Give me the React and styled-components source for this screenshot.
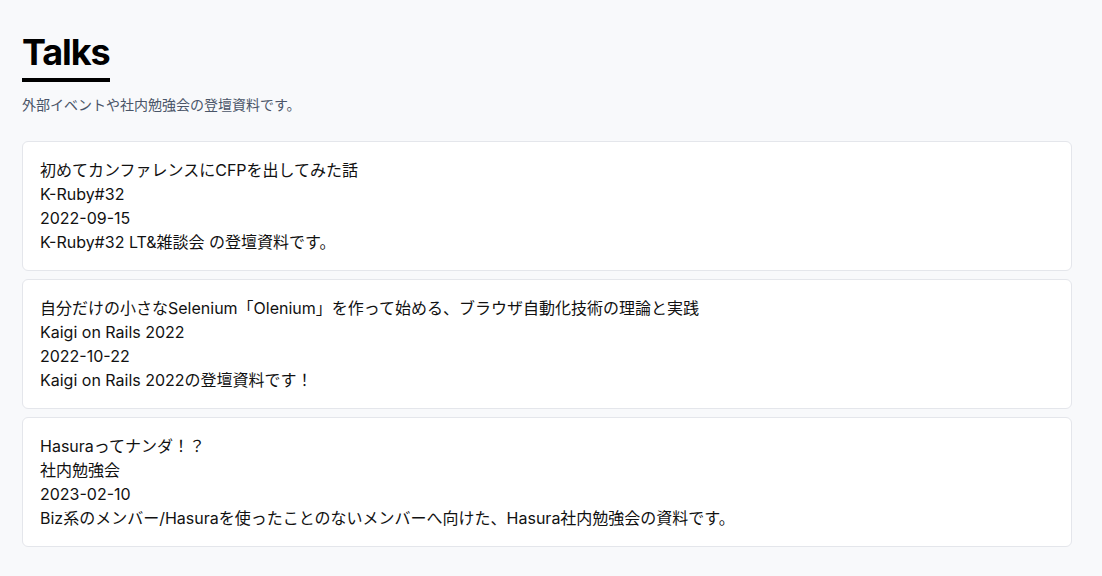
import React from 'react';
import styled, { createGlobalStyle } from 'styled-components';

const GlobalStyle = createGlobalStyle`
  html, body {
    margin: 0;
    padding: 0;
    background: #f8f9fb;
  }
  body {
    font-family: Inter, "Noto Sans CJK JP", sans-serif;
    color: #111;
  }
`;

const Page = styled.main`
  padding: 30px 22px 24px 22px;
  max-width: 1050px;
`;

const Header = styled.header`
  margin-bottom: 26px;
`;

const Title = styled.h1`
  display: inline-block;
  margin: 0;
  font-size: 36px;
  font-weight: 700;
  line-height: 44px;
  letter-spacing: -1.1px;
  padding-bottom: 4px;
  border-bottom: 4px solid #000;
  color: #000;
`;

const Lead = styled.p`
  margin: 13px 0 0;
  font-size: 14px;
  line-height: 20px;
  color: #4a5568;
`;

const TalkList = styled.ul`
  list-style: none;
  margin: 0;
  padding: 0;
  display: flex;
  flex-direction: column;
  gap: 8px;
`;

const TalkCard = styled.li`
  background: #fff;
  border: 1px solid #e4e6eb;
  border-radius: 6px;
  padding: 16px 17px;
`;

const Line = styled.div`
  font-size: 16px;
  line-height: 24px;
  color: #111;
`;

const talks = [
  {
    title: '初めてカンファレンスにCFPを出してみた話',
    event: 'K-Ruby#32',
    date: '2022-09-15',
    description: 'K-Ruby#32 LT&雑談会 の登壇資料です。',
  },
  {
    title: '自分だけの小さなSelenium「Olenium」を作って始める、ブラウザ自動化技術の理論と実践',
    event: 'Kaigi on Rails 2022',
    date: '2022-10-22',
    description: 'Kaigi on Rails 2022の登壇資料です！',
  },
  {
    title: 'Hasuraってナンダ！？',
    event: '社内勉強会',
    date: '2023-02-10',
    description: 'Biz系のメンバー/Hasuraを使ったことのないメンバーへ向けた、Hasura社内勉強会の資料です。',
  },
];

const App = () => (
  <>
    <GlobalStyle />
    <Page>
      <Header>
        <Title>Talks</Title>
        <Lead>外部イベントや社内勉強会の登壇資料です。</Lead>
      </Header>
      <TalkList>
        {talks.map((talk) => (
          <TalkCard key={talk.date}>
            <Line>{talk.title}</Line>
            <Line>{talk.event}</Line>
            <Line>{talk.date}</Line>
            <Line>{talk.description}</Line>
          </TalkCard>
        ))}
      </TalkList>
    </Page>
  </>
);

export default App;
